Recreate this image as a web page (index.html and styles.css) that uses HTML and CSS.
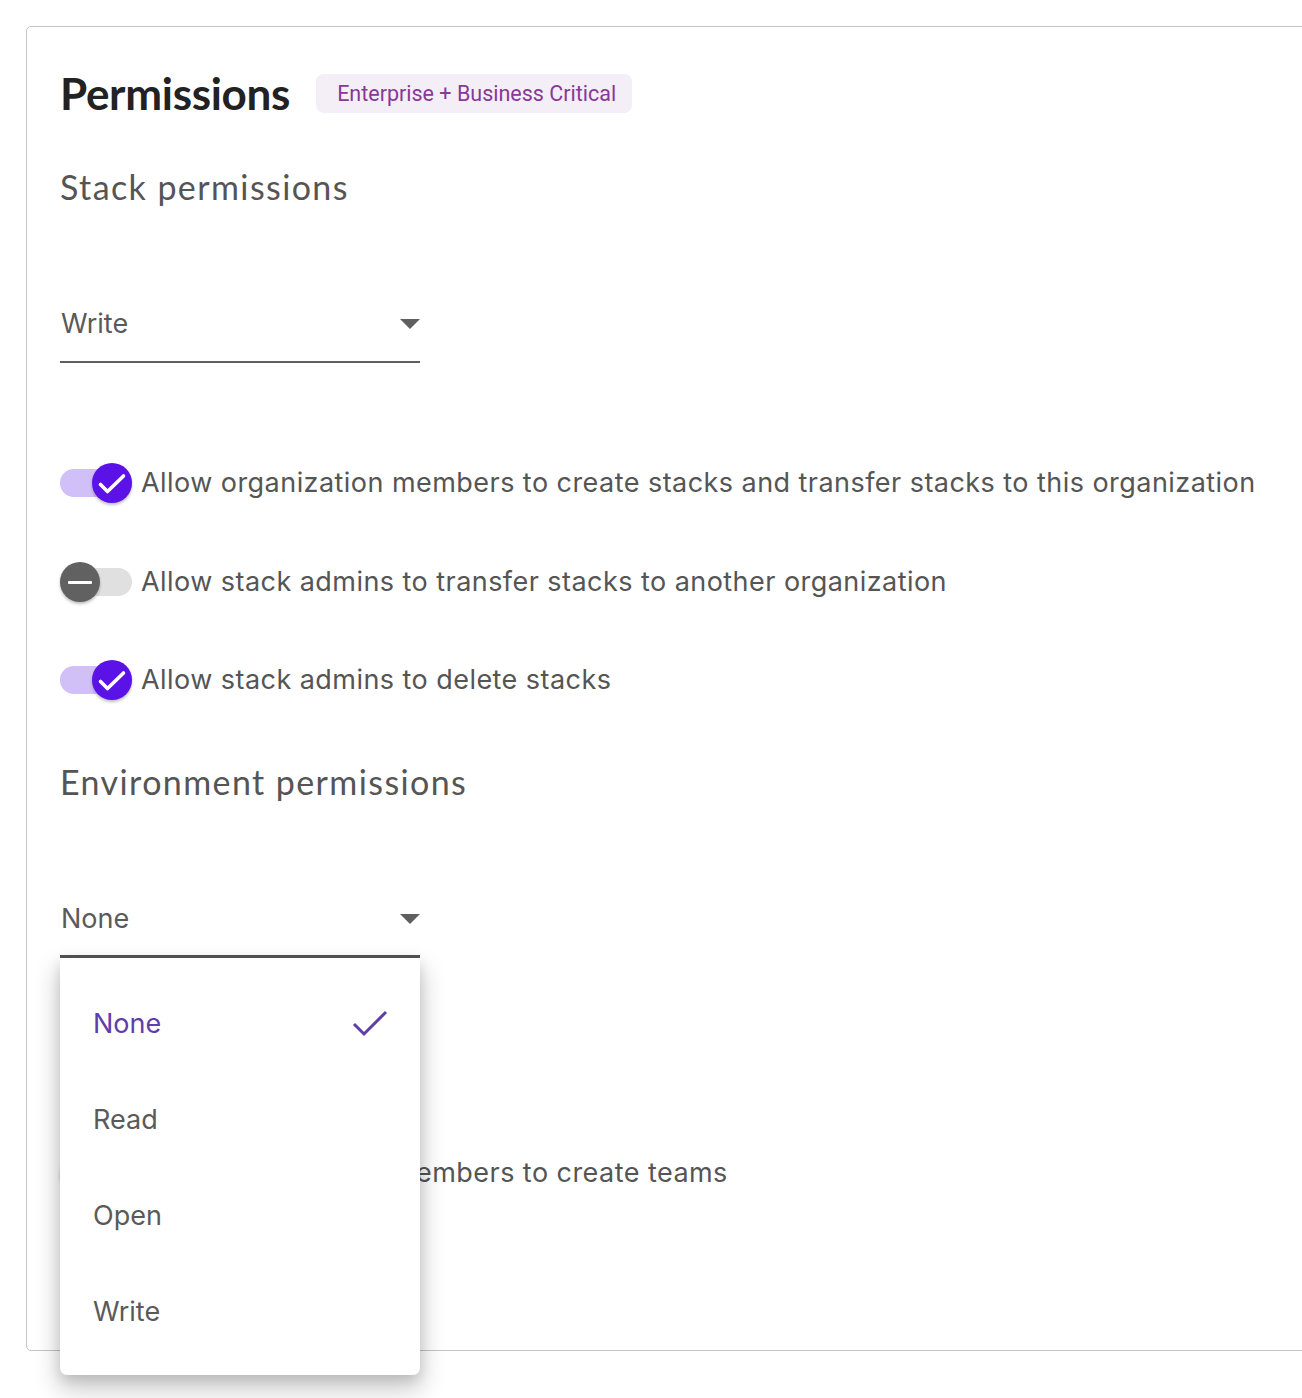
FILE: index.html
```html
<!DOCTYPE html>
<html lang="en">
<head>
<meta charset="utf-8">
<title>Permissions</title>
<link rel="stylesheet" href="styles.css">
</head>
<body>
<div class="page">
  <section class="card">
    <div class="title-row">
      <h1 class="title">Permissions</h1>
      <span class="badge">Enterprise + Business Critical</span>
    </div>

    <h2 class="section-heading">Stack permissions</h2>
    <div class="select">
      <div class="select-field">
        <span class="select-value">Write</span>
        <span class="select-arrow"></span>
      </div>
    </div>

    <div class="toggle-row first">
      <span class="toggle on"><span class="knob"><svg viewBox="0 0 40 40" width="40" height="40"><path d="M8.5 21.5l7 7L31.5 13" fill="none" stroke="#fff" stroke-width="3.6" stroke-linecap="round" stroke-linejoin="round"/></svg></span></span>
      <span class="toggle-label">Allow organization members to create stacks and transfer stacks to this organization</span>
    </div>
    <div class="toggle-row second">
      <span class="toggle off"><span class="knob"><span class="minus"></span></span></span>
      <span class="toggle-label">Allow stack admins to transfer stacks to another organization</span>
    </div>
    <div class="toggle-row">
      <span class="toggle on"><span class="knob"><svg viewBox="0 0 40 40" width="40" height="40"><path d="M8.5 21.5l7 7L31.5 13" fill="none" stroke="#fff" stroke-width="3.6" stroke-linecap="round" stroke-linejoin="round"/></svg></span></span>
      <span class="toggle-label">Allow stack admins to delete stacks</span>
    </div>

    <h2 class="section-heading env">Environment permissions</h2>
    <div class="select">
      <div class="select-field focused">
        <span class="select-value">None</span>
        <span class="select-arrow"></span>
      </div>
      <ul class="menu">
        <li class="menu-item selected">
          <span>None</span>
          <svg class="menu-check" viewBox="0 0 36 28" width="36" height="28"><path d="M2 15l10 10L34 3" fill="none" stroke="#5e3ea8" stroke-width="3"/></svg>
        </li>
        <li class="menu-item">Read</li>
        <li class="menu-item">Open</li>
        <li class="menu-item">Write</li>
      </ul>
    </div>

    <div class="toggle-row team-row">
      <span class="toggle off"><span class="knob"><span class="minus"></span></span></span>
      <span class="toggle-label">Allow organization members to create teams</span>
    </div>
  </section>
</div>
</body>
</html>
```

FILE: styles.css
```css
html {
  overflow: hidden;
}

html, body {
  margin: 0;
  padding: 0;
  background: #ffffff;
}

.page {
  padding: 26px 0 60px 26px;
}

.card {
  width: 1320px;
  border: 1px solid #c4c4c4;
  border-radius: 5px;
  padding: 42px 0 157px 33px;
  box-sizing: border-box;
  font-family: "Inter", "Roboto", sans-serif;
  color: #5a5a5a;
}

.title-row {
  display: flex;
  align-items: center;
  height: 48px;
  gap: 26px;
}

.title {
  margin: 0;
  font-family: "Lato", "Inter", sans-serif;
  font-weight: 700;
  font-size: 44px;
  line-height: 48px;
  color: #222222;
  letter-spacing: -0.3px;
}

.badge {
  display: inline-flex;
  align-items: center;
  height: 39px;
  padding: 0 16px 0 21px;
  border-radius: 8px;
  background: #f4eef6;
  color: #883896;
  font-family: "Roboto", sans-serif;
  font-size: 21.5px;
  font-weight: 400;
}

.section-heading {
  margin: 50px 0 0 0;
  font-family: "Lato", "Inter", sans-serif;
  font-weight: 400;
  font-size: 34px;
  line-height: 40px;
  color: #555555;
  letter-spacing: 1.4px;
}

.section-heading.env {
  margin-top: 62px;
}

.select {
  position: relative;
  width: 360px;
  margin-top: 101px;
}

.select-field {
  display: flex;
  align-items: center;
  justify-content: space-between;
  height: 32px;
  padding-bottom: 21px;
  border-bottom: 2px solid #5f5f5f;
}

.select-field.focused {
  padding-bottom: 20px;
  border-bottom: 3px solid #555555;
}

.select-value {
  font-size: 27px;
  line-height: 32px;
  color: #5a5a5a;
  padding-left: 1px;
}

.select-arrow {
  width: 0;
  height: 0;
  border-left: 10px solid transparent;
  border-right: 10px solid transparent;
  border-top: 10px solid #5f5f5f;
}

.menu {
  position: absolute;
  top: 100%;
  left: 0;
  width: 360px;
  margin: 0;
  padding: 17px 0 16px 0;
  list-style: none;
  background: #ffffff;
  border-radius: 0 0 7px 7px;
  box-shadow: 0 12px 24px 2px rgba(0, 0, 0, 0.22), 0 4px 12px rgba(0, 0, 0, 0.1);
  z-index: 10;
}

.menu-item {
  display: flex;
  align-items: center;
  justify-content: space-between;
  height: 96px;
  padding: 0 32px 0 33px;
  font-size: 27px;
  color: #5a5a5a;
}

.menu-item.selected {
  color: #5e3ea8;
}

.menu-check {
  display: block;
}

.toggle-row {
  display: flex;
  align-items: center;
  height: 40px;
  margin-top: 58px;
}

.toggle-row.first {
  margin-top: 100px;
}

.toggle-row.second {
  margin-top: 59px;
}

.toggle-row.team-row {
  margin-top: 195px;
}

.toggle {
  position: relative;
  flex: none;
  width: 72px;
  height: 28px;
  border-radius: 14px;
  margin-right: 9px;
}

.toggle.on {
  background: #d1bff7;
}

.toggle.off {
  background: #e0e0e0;
}

.knob {
  position: absolute;
  top: -6px;
  width: 40px;
  height: 40px;
  border-radius: 50%;
  display: flex;
  align-items: center;
  justify-content: center;
  box-shadow: 0 2px 3px rgba(0, 0, 0, 0.25);
}

.knob svg {
  display: block;
}

.toggle.on .knob {
  right: 0;
  background: #5a12e6;
}

.toggle.off .knob {
  left: 0;
  background: #616161;
}

.minus {
  width: 24px;
  height: 3px;
  background: #ffffff;
  border-radius: 1px;
}

.toggle-label {
  font-size: 27px;
  line-height: 40px;
  color: #555555;
  letter-spacing: 0.45px;
  white-space: nowrap;
}
```
